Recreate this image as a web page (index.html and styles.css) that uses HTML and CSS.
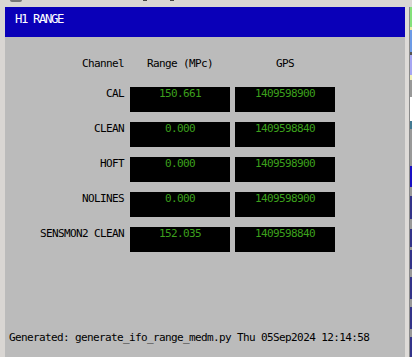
FILE: index.html
```html
<!DOCTYPE html>
<html lang="en">
<head>
    <meta charset="UTF-8">
    <meta name="viewport" content="width=device-width, initial-scale=1.0">
    <title>H1 RANGE</title>
    <link rel="stylesheet" href="styles.css">
</head>
<body>
    <div class="titlebar">
        <span class="knob"></span>
        <span class="btn btn-min"></span>
        <span class="btn"></span>
    </div>
    <div class="main">
        <div class="frame-left"></div>
        <div class="window">
            <div class="header">H1 RANGE</div>
            <div class="content">
                <div class="grid">
                    <div class="head label">Channel</div>
                    <div class="head">Range (MPc)</div>
                    <div class="head">GPS</div>

                    <div class="label">CAL</div>
                    <div class="value">150.661</div>
                    <div class="value">1409598900</div>

                    <div class="label">CLEAN</div>
                    <div class="value">0.000</div>
                    <div class="value">1409598840</div>

                    <div class="label">HOFT</div>
                    <div class="value">0.000</div>
                    <div class="value">1409598900</div>

                    <div class="label">NOLINES</div>
                    <div class="value">0.000</div>
                    <div class="value">1409598900</div>

                    <div class="label">SENSMON2 CLEAN</div>
                    <div class="value">152.035</div>
                    <div class="value">1409598840</div>
                </div>
                <div class="footer">Generated: generate_ifo_range_medm.py Thu 05Sep2024 12:14:58</div>
            </div>
        </div>
        <div class="frame-right"></div>
        <div class="edge"></div>
        <div class="strip"></div>
    </div>
</body>
</html>
```

FILE: styles.css
```css
body {
    margin: 0;
    padding: 0;
    width: 412px;
    height: 357px;
    overflow: hidden;
    background-color: #d9d6d3;
    font-family: "DejaVu Sans Mono", monospace;
    font-size: 11px;
    letter-spacing: -0.62px;
    color: #000;
}
.titlebar {
    height: 7px;
    display: flex;
    align-items: flex-start;
    background-color: #d9d6d3;
}
.knob {
    width: 12px;
    height: 2px;
    margin-left: 10px;
    background-color: #777;
    border-radius: 0 0 6px 6px;
}
.btn {
    width: 4px;
    height: 1px;
    background-color: #444;
}
.btn-min {
    margin-left: 121px;
    margin-right: 23px;
}
.main {
    display: flex;
    height: 350px;
}
.frame-left {
    width: 5px;
    background-color: #d9d6d3;
}
.window {
    width: 400px;
    display: flex;
    flex-direction: column;
}
.header {
    height: 30px;
    box-sizing: border-box;
    padding: 4px 0 0 10px;
    background-color: #0a00b8;
    color: #fff;
    font-size: 12.3px;
    letter-spacing: -1.4px;
    line-height: 16px;
}
.content {
    flex: 1;
    display: flex;
    flex-direction: column;
    background-color: #bbbbbb;
    padding-top: 20px;
}
.grid {
    display: grid;
    grid-template-columns: 114px 100px 100px;
    grid-auto-rows: 25px;
    grid-template-rows: 20px;
    column-gap: 5px;
    row-gap: 10px;
    padding-left: 6px;
}
.head {
    line-height: 13px;
    text-align: center;
}
.label {
    text-align: right;
    padding-right: 1px;
    line-height: 13px;
}
.value {
    background-color: #000;
    color: #3ca01c;
    text-align: center;
    line-height: 13px;
}
.footer {
    margin-top: auto;
    padding: 0 0 13px 4px;
    line-height: 13px;
}
.frame-right {
    width: 4px;
    background-color: #dedbd8;
}
.edge {
    width: 1px;
    background-color: #8a8a8a;
}
.strip {
    width: 2px;
    background: linear-gradient(to bottom,
        #84e07a 0px, #84e07a 20px,
        #e8e8a8 20px, #e8e8a8 23px,
        #6d9be6 23px, #6d9be6 45px,
        #555 45px, #555 48px,
        #a6a6f2 48px, #a6a6f2 68px,
        #eeeeb8 68px, #eeeeb8 73px,
        #999 73px, #999 90px,
        #ffffff 90px, #ffffff 114px,
        #447a92 114px, #447a92 122px,
        #999 122px, #999 159px,
        #1a10c4 159px, #1a10c4 180px,
        #999 180px, #999 189px,
        #34348a 189px, #34348a 212px,
        #999 212px, #999 222px,
        #34348a 222px, #34348a 240px,
        #999 240px, #999 243px,
        #34348a 243px, #34348a 262px,
        #999 262px, #999 270px,
        #34348a 270px, #34348a 292px,
        #999 292px, #999 300px,
        #34348a 300px, #34348a 322px,
        #999 322px, #999 330px,
        #34348a 330px, #34348a 350px);
}
```
